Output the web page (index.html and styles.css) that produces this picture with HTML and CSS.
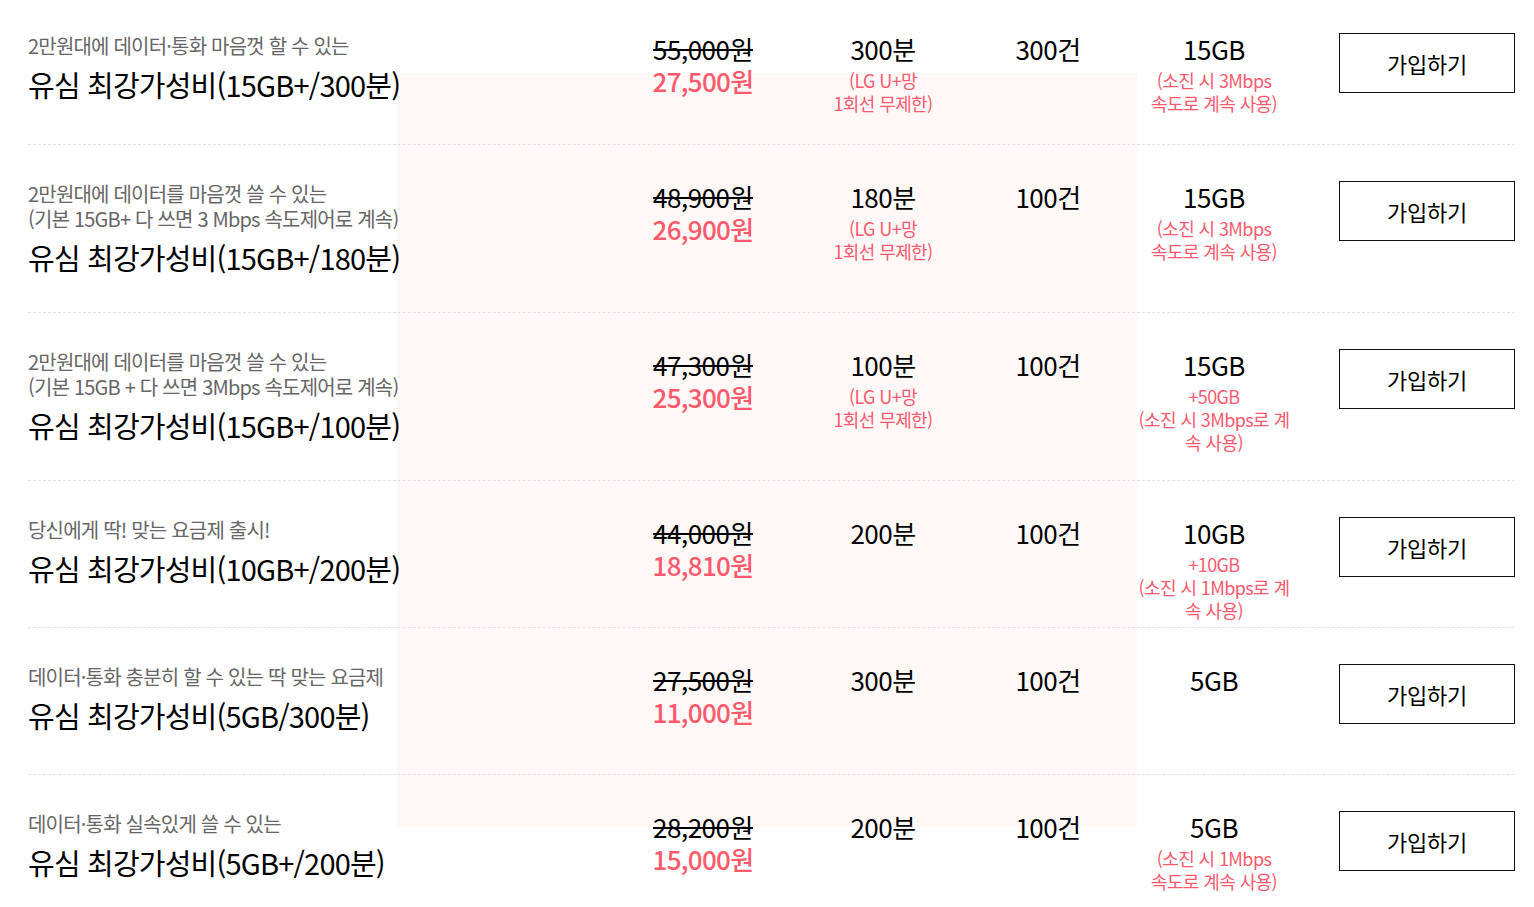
FILE: index.html
```html
<!DOCTYPE html>
<html lang="ko">
<head>
<meta charset="utf-8">
<title>유심 요금제</title>
<link rel="stylesheet" href="styles.css">
</head>
<body>
<div class="page">
  <div class="tint"></div>
  <ul class="plans">
    <li class="plan">
      <div class="name">
        <p class="desc">2만원대에 데이터·통화 마음껏 할 수 있는</p>
        <p class="title">유심 최강가성비(15GB+/300분)</p>
      </div>
      <div class="price"><s class="orig">55,000원</s><span class="sale">27,500원</span></div>
      <div class="cell"><span class="val">300분</span><span class="note">(LG U+망<br>1회선 무제한)</span></div>
      <div class="cell"><span class="val">300건</span></div>
      <div class="cell"><span class="val">15GB</span><span class="note">(소진 시 3Mbps<br>속도로 계속 사용)</span></div>
      <div class="act"><button class="join">가입하기</button></div>
    </li>
    <li class="plan tall">
      <div class="name">
        <p class="desc">2만원대에 데이터를 마음껏 쓸 수 있는<br>(기본 15GB+ 다 쓰면 3 Mbps 속도제어로 계속)</p>
        <p class="title">유심 최강가성비(15GB+/180분)</p>
      </div>
      <div class="price"><s class="orig">48,900원</s><span class="sale">26,900원</span></div>
      <div class="cell"><span class="val">180분</span><span class="note">(LG U+망<br>1회선 무제한)</span></div>
      <div class="cell"><span class="val">100건</span></div>
      <div class="cell"><span class="val">15GB</span><span class="note">(소진 시 3Mbps<br>속도로 계속 사용)</span></div>
      <div class="act"><button class="join">가입하기</button></div>
    </li>
    <li class="plan tall">
      <div class="name">
        <p class="desc">2만원대에 데이터를 마음껏 쓸 수 있는<br>(기본 15GB + 다 쓰면 3Mbps 속도제어로 계속)</p>
        <p class="title">유심 최강가성비(15GB+/100분)</p>
      </div>
      <div class="price"><s class="orig">47,300원</s><span class="sale">25,300원</span></div>
      <div class="cell"><span class="val">100분</span><span class="note">(LG U+망<br>1회선 무제한)</span></div>
      <div class="cell"><span class="val">100건</span></div>
      <div class="cell"><span class="val">15GB</span><span class="note">+50GB<br>(소진 시 3Mbps로 계<br>속 사용)</span></div>
      <div class="act"><button class="join">가입하기</button></div>
    </li>
    <li class="plan">
      <div class="name">
        <p class="desc">당신에게 딱! 맞는 요금제 출시!</p>
        <p class="title">유심 최강가성비(10GB+/200분)</p>
      </div>
      <div class="price"><s class="orig">44,000원</s><span class="sale">18,810원</span></div>
      <div class="cell"><span class="val">200분</span></div>
      <div class="cell"><span class="val">100건</span></div>
      <div class="cell"><span class="val">10GB</span><span class="note">+10GB<br>(소진 시 1Mbps로 계<br>속 사용)</span></div>
      <div class="act"><button class="join">가입하기</button></div>
    </li>
    <li class="plan">
      <div class="name">
        <p class="desc">데이터·통화 충분히 할 수 있는 딱 맞는 요금제</p>
        <p class="title">유심 최강가성비(5GB/300분)</p>
      </div>
      <div class="price"><s class="orig">27,500원</s><span class="sale">11,000원</span></div>
      <div class="cell"><span class="val">300분</span></div>
      <div class="cell"><span class="val">100건</span></div>
      <div class="cell"><span class="val">5GB</span></div>
      <div class="act"><button class="join">가입하기</button></div>
    </li>
    <li class="plan">
      <div class="name">
        <p class="desc">데이터·통화 실속있게 쓸 수 있는</p>
        <p class="title">유심 최강가성비(5GB+/200분)</p>
      </div>
      <div class="price"><s class="orig">28,200원</s><span class="sale">15,000원</span></div>
      <div class="cell"><span class="val">200분</span></div>
      <div class="cell"><span class="val">100건</span></div>
      <div class="cell"><span class="val">5GB</span><span class="note">(소진 시 1Mbps<br>속도로 계속 사용)</span></div>
      <div class="act"><button class="join">가입하기</button></div>
    </li>
  </ul>
</div>
</body>
</html>
```

FILE: styles.css
```css
* { box-sizing: border-box; }
html, body {
  margin: 0;
  padding: 0;
  background: #fff;
  overflow: hidden;
}
body {
  font-family: "Noto Sans CJK KR", "Noto Sans", sans-serif;
  color: #000;
}
.page {
  position: relative;
  height: 907px;
}
.tint {
  position: absolute;
  left: 397px;
  top: 77px;
  width: 740px;
  height: 754px;
  background: #fff8f7;
  z-index: 0;
}
.plans {
  position: relative;
  z-index: 1;
  list-style: none;
  margin: -4px 19px 0 28px;
  padding: 0;
}
.plan {
  display: grid;
  grid-template-columns: 592px 166px 194px 136px 196px 203px;
  align-items: start;
  height: 147px;
  padding-top: 36px;
  border-top: 1px dashed #e2e2e2;
}
.plan:first-child { border-top-color: transparent; height: 148px; }
.plan.tall { height: 168px; }
.name p { margin: 0; }
.desc {
  font-size: 20px;
  line-height: 25px;
  color: #666;
  letter-spacing: -0.8px;
}
.title {
  margin-top: 6px !important;
  font-size: 29px;
  line-height: 40px;
  letter-spacing: -0.8px;
  color: #000;
}
.price, .cell {
  display: flex;
  flex-direction: column;
  align-items: center;
  text-align: center;
}
.orig {
  font-size: 26px;
  line-height: 32px;
  letter-spacing: -0.5px;
  color: #000;
  text-decoration-thickness: 2px;
}
.sale {
  font-size: 26px;
  line-height: 32px;
  letter-spacing: -0.7px;
  font-weight: 500;
  color: #ff5a6b;
}
.val {
  font-size: 26px;
  line-height: 32px;
  letter-spacing: -0.5px;
}
.note {
  margin-top: 4px;
  font-size: 18px;
  line-height: 23px;
  letter-spacing: -0.6px;
  color: #fb5a6e;
}
.act {
  display: flex;
  justify-content: flex-end;
}
.join {
  width: 176px;
  height: 60px;
  border: 1px solid #111;
  background: #fff;
  font-family: inherit;
  font-size: 22px;
  letter-spacing: -0.3px;
  color: #000;
  padding: 0;
  cursor: pointer;
}
```
